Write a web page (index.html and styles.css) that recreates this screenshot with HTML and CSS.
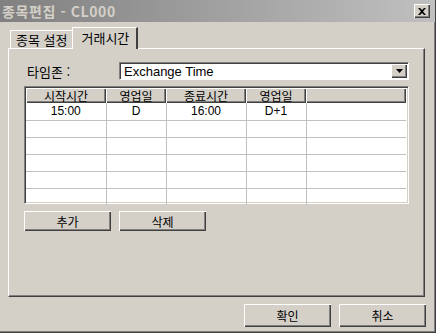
FILE: index.html
```html
<!DOCTYPE html>
<html lang="ko">
<head>
    <meta charset="UTF-8">
    <title>종목편집 - CL000</title>
    <link rel="stylesheet" href="styles.css">
</head>
<body>
    <div class="window">
        <div class="titlebar">
            <span class="title">종목편집 - CL000</span>
            <button class="close">
                <svg width="8" height="7" viewBox="0 0 8 7"><path d="M0 0h2l2 2 2-2h2L5 3.5 8 7H6L4 5 2 7H0l3-3.5z" fill="#000"/></svg>
            </button>
        </div>
        <div class="content">
            <div class="tabs">
                <div class="tab">종목 설정</div>
                <div class="tab active">거래시간</div>
            </div>
            <div class="panel">
                <div class="tz-row">
                    <label class="tz-label">타임존 :</label>
                    <div class="combo">
                        <span class="combo-value">Exchange Time</span>
                        <span class="combo-btn">
                            <svg width="7" height="4" viewBox="0 0 7 4"><path d="M0 0h7L3.5 4z" fill="#000"/></svg>
                        </span>
                    </div>
                </div>
                <div class="grid">
                    <table>
                        <thead>
                            <tr>
                                <th class="c1">시작시간</th>
                                <th class="c2">영업일</th>
                                <th class="c1">종료시간</th>
                                <th class="c2">영업일</th>
                                <th></th>
                            </tr>
                        </thead>
                        <tbody id="rows"></tbody>
                    </table>
                </div>
                <div class="actions">
                    <button class="btn">추가</button>
                    <button class="btn">삭제</button>
                </div>
            </div>
            <div class="footer">
                <button class="btn">확인</button>
                <button class="btn">취소</button>
            </div>
        </div>
    </div>

    <script>
        // trading session rows
        const sessions = [
            { start: "15:00", startDay: "D", end: "16:00", endDay: "D+1" }
        ];

        const tbody = document.getElementById('rows');
        for (let i = 0; i < 6; i++) {
            const s = sessions[i] || { start: "", startDay: "", end: "", endDay: "" };
            const row = document.createElement('tr');
            row.innerHTML = `
                <td>${s.start}</td>
                <td>${s.startDay}</td>
                <td>${s.end}</td>
                <td>${s.endDay}</td>
                <td></td>
            `;
            tbody.appendChild(row);
        }
    </script>
</body>
</html>
```

FILE: styles.css
```css
body {
    margin: 0;
    background: #ffffff;
    font-family: "Noto Sans CJK KR", "Liberation Sans", sans-serif;
    font-size: 12px;
    color: #000;
}

.window {
    width: 436px;
    height: 333px;
    box-sizing: border-box;
    background: #d4d0c8;
    border-right: 1px solid #404040;
    border-bottom: 1px solid #404040;
    box-shadow: inset -1px -1px 0 #808080;
    display: flex;
    flex-direction: column;
}

.titlebar {
    height: 22px;
    display: flex;
    align-items: center;
    justify-content: space-between;
    padding: 0 5px 0 2px;
    background: linear-gradient(to right, #808080, #c0c0c0);
}

.title {
    color: #d4d0c8;
    font-weight: bold;
    font-size: 14px;
    letter-spacing: 0.6px;
}

.close {
    width: 16px;
    height: 14px;
    padding: 0;
    display: flex;
    align-items: center;
    justify-content: center;
    background: #d4d0c8;
    border: none;
    box-shadow: inset 1px 1px 0 #ffffff, inset -1px -1px 0 #404040, inset -2px -2px 0 #808080;
}

.content {
    flex: 1;
    padding: 5px 10px 0 8px;
    display: flex;
    flex-direction: column;
}

.tabs {
    display: flex;
    align-items: flex-end;
    padding-left: 2px;
    height: 21px;
}

.tab {
    height: 18px;
    padding: 0 5px;
    line-height: 18px;
    border-top: 1px solid #ffffff;
    border-left: 1px solid #ffffff;
    border-right: 2px solid #404040;
    box-sizing: border-box;
    font-size: 13px;
}

.tab.active {
    height: 22px;
    line-height: 20px;
    margin-left: -2px;
    margin-bottom: -1px;
    padding: 0 7px 0 8px;
    background: #d4d0c8;
    position: relative;
    z-index: 1;
}

.panel {
    height: 249px;
    box-sizing: border-box;
    border-top: 1px solid #ffffff;
    border-left: 1px solid #ffffff;
    border-right: 1px solid #404040;
    border-bottom: 1px solid #404040;
    box-shadow: inset -1px -1px 0 #808080;
    padding: 13px 15px 0 15px;
}

.tz-row {
    display: flex;
    align-items: center;
    height: 18px;
}

.tz-label {
    width: 95px;
    box-sizing: border-box;
    padding-left: 3px;
    font-size: 13px;
}

.combo {
    flex: 1;
    height: 18px;
    box-sizing: border-box;
    background: #ffffff;
    border-top: 1px solid #808080;
    border-left: 1px solid #808080;
    border-right: 1px solid #ffffff;
    border-bottom: 1px solid #ffffff;
    box-shadow: inset 1px 1px 0 #404040;
    display: flex;
    align-items: center;
    justify-content: space-between;
    padding: 0 1px 0 4px;
}

.combo-value {
    font-family: "Liberation Sans", sans-serif;
    font-size: 13px;
}

.combo-btn {
    width: 16px;
    height: 14px;
    display: flex;
    align-items: center;
    justify-content: center;
    background: #d4d0c8;
    box-shadow: inset 1px 1px 0 #ffffff, inset -1px -1px 0 #404040, inset -2px -2px 0 #808080;
}

.grid {
    margin-top: 6px;
    height: 118px;
    box-sizing: border-box;
    background: #ffffff;
    border-top: 1px solid #808080;
    border-left: 1px solid #808080;
    border-right: 1px solid #ffffff;
    border-bottom: 1px solid #ffffff;
    box-shadow: inset 1px 1px 0 #404040, inset -1px -1px 0 #d4d0c8;
    padding: 1px 2px 0 1px;
}

table {
    width: 100%;
    border-collapse: collapse;
    table-layout: fixed;
}

th {
    height: 15px;
    padding: 0;
    font-weight: normal;
    font-size: 12px;
    line-height: 13px;
    background: #d4d0c8;
    box-sizing: border-box;
    box-shadow: inset 1px 1px 0 #ffffff, inset -1px -1px 0 #404040, inset -2px -2px 0 #808080;
}

th.c1 {
    width: 80px;
}

th.c2 {
    width: 60px;
}

td {
    height: 17px;
    padding: 0;
    text-align: center;
    font-family: "Liberation Sans", sans-serif;
    font-size: 12px;
    line-height: 14px;
    border-right: 1px solid #c0c0c0;
    border-bottom: 1px solid #c0c0c0;
    box-sizing: border-box;
}

td:last-child {
    border-right: none;
}

tr:last-child td {
    border-bottom: none;
}

.actions {
    display: flex;
    gap: 8px;
    margin-top: 7px;
}

.btn {
    width: 87px;
    height: 20px;
    padding: 0;
    font-family: "Noto Sans CJK KR", "Liberation Sans", sans-serif;
    font-size: 12px;
    background: #d4d0c8;
    border: none;
    box-shadow: inset 1px 1px 0 #ffffff, inset -1px -1px 0 #404040, inset -2px -2px 0 #808080;
}

.footer {
    display: flex;
    justify-content: flex-end;
    gap: 8px;
    margin-top: 7px;
    margin-right: -1px;
}

.footer .btn {
    height: 23px;
}
```
